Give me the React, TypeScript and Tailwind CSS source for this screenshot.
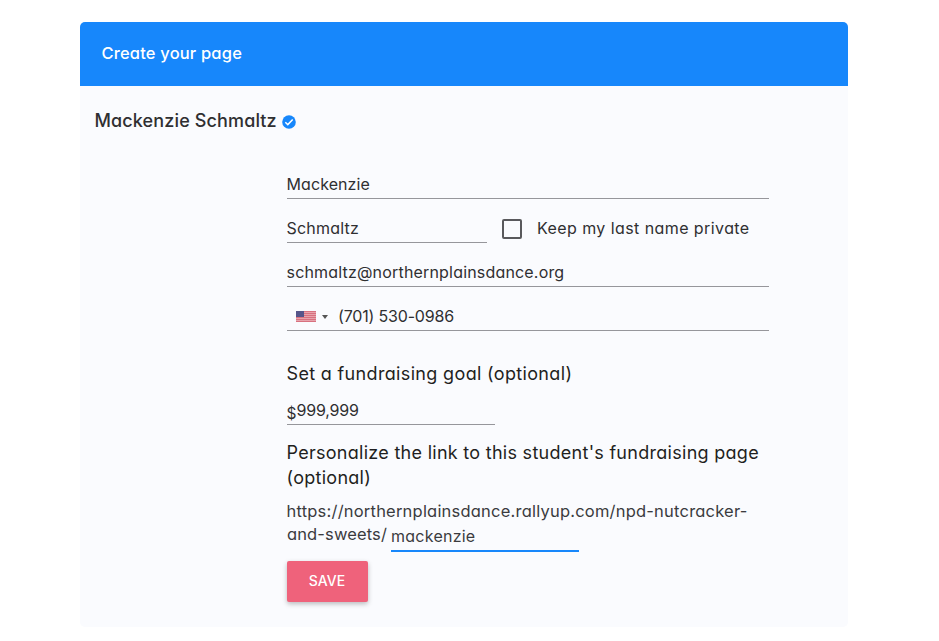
import type { ReactNode } from "react";

function Field({ children, className = "" }: { children: ReactNode; className?: string }) {
  return (
    <div className={`flex h-[30px] items-center border-b border-[#96969b] text-[16px] text-[#2f2f31] ${className}`}>
      {children}
    </div>
  );
}

function VerifiedBadge() {
  return (
    <svg viewBox="0 0 14 14" className="mt-[3px] ml-[5px] size-[14px]">
      <circle cx="7" cy="7" r="6.8" fill="#1787fb" />
      <path d="M3.3 7.3 5.8 9.6 10.7 4.6" fill="none" stroke="#fff" strokeWidth="1.5" />
    </svg>
  );
}

function Flag() {
  return (
    <svg viewBox="0 0 20 11" className="mt-[2px] ml-[9px] h-[11px] w-[20px]">
      <rect width="20" height="11" fill="#e7a3ac" />
      <path d="M0 .5H20M0 2.5H20M0 4.5H20M0 6.5H20M0 8.5H20M0 10.5H20" stroke="#d8717f" strokeWidth="1" />
      <rect width="8" height="6" fill="#55558a" />
    </svg>
  );
}

export default function App() {
  return (
    <main className="h-[641px] bg-white pt-[22px] pl-[80px] font-['Inter','Liberation_Sans',sans-serif] [font-feature-settings:'cv11']">
      <section className="h-[605px] w-[768px] overflow-hidden rounded-[5px] bg-[#fafbfe]">
        <header className="flex h-[64px] items-center bg-[#1787fb] pb-[1px] pl-[21.5px] text-[16.5px] font-medium text-white">
          <h1 className="tracking-[0.17px]">Create your page</h1>
        </header>
        <div className="flex h-[70px] items-center pb-[2px] pl-[14.5px] text-[18px] font-medium text-[#2f2f31]">
          <h2 className="tracking-[0.13px]">Mackenzie Schmaltz</h2>
          <VerifiedBadge />
        </div>
        <form className="ml-[207px] w-[482px] pt-[13px]" onSubmit={(e) => e.preventDefault()}>
          <Field><span className="-ml-[0.5px] tracking-[0.08px]">Mackenzie</span></Field>
          <div className="mt-[14px] flex">
            <Field className="w-[200px]"><span className="-ml-[0.5px] tracking-[0.2px]">Schmaltz</span></Field>
            <label className="flex h-[30px] items-center text-[16px] text-[#2f2f31]">
              <span className="mt-[1px] ml-[15px] size-[20px] rounded-[2px] border-2 border-[#59595c]" />
              <span className="-mt-[1px] ml-[15px] tracking-[0.42px]">Keep my last name private</span>
            </label>
          </div>
          <Field className="mt-[14px]"><span className="-ml-[0.5px] tracking-[0.18px]">schmaltz@northernplainsdance.org</span></Field>
          <Field className="mt-[14px]">
            <Flag />
            <svg viewBox="0 0 6 4" className="mt-[2px] ml-[6px] h-[4px] w-[6px]"><path d="M0 0H6L3 4Z" fill="#555" /></svg>
            <span className="ml-[10px] tracking-[-0.18px]">(701) 530-0986</span>
          </Field>
          <h3 className="mt-[30px] -ml-[0.5px] h-[26px] text-[18px] leading-[26px] tracking-[0.34px] text-[#1f1f21]">
            <span>Set a fundraising goal (optional)</span>
          </h3>
          <Field className="mt-[8px] w-[208px]">
            <span className="mt-[9px] -ml-[0.5px] w-[10px] text-[15.5px] leading-[22px]">$</span>
            <span className="tracking-[-0.2px]">999,999</span>
          </Field>
          <h3 className="mt-[15px] -ml-[0.5px] text-[18px] leading-[25px] tracking-[0.28px] whitespace-nowrap text-[#1f1f21]">
            <span className="block">Personalize the link to this student's fundraising page</span>
            <span className="block">(optional)</span>
          </h3>
          <div className="mt-[9px] text-[16.5px] leading-[24px] whitespace-nowrap text-[#3b3b3e]">
            <span className="-ml-[0.5px] block tracking-[0.21px]">https://northernplainsdance.rallyup.com/npd-nutcracker-</span>
            <div className="flex h-[29px]">
              <span className="w-[104px] leading-[22px] tracking-[0.13px]">and-sweets/</span>
              <span className="h-[29px] w-[188px] border-b-2 border-[#1787fb] text-[16px] leading-[27px] tracking-[0.25px]">mackenzie</span>
            </div>
          </div>
          <button className="mt-[9px] block h-[41px] w-[81px] rounded-[2px] bg-[#ef627b] pr-[1px] pb-[2px] text-[14px] font-medium tracking-[0.1px] text-white shadow-[0_2px_5px_rgba(0,0,0,0.26)]">
            SAVE
          </button>
        </form>
      </section>
    </main>
  );
}
